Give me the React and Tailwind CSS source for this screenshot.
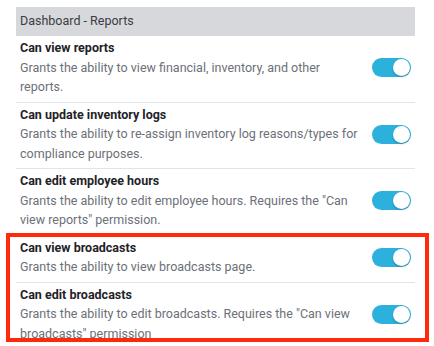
const permissions = [
  {
    id: 'view-reports',
    title: 'Can view reports',
    description: 'Grants the ability to view financial, inventory, and other reports.',
  },
  {
    id: 'update-inventory-logs',
    title: 'Can update inventory logs',
    description: 'Grants the ability to re-assign inventory log reasons/types for compliance purposes.',
  },
  {
    id: 'edit-employee-hours',
    title: 'Can edit employee hours',
    description: 'Grants the ability to edit employee hours. Requires the "Can view reports" permission.',
  },
  {
    id: 'view-broadcasts',
    title: 'Can view broadcasts',
    description: 'Grants the ability to view broadcasts page.',
    highlight: true,
  },
  {
    id: 'edit-broadcasts',
    title: 'Can edit broadcasts',
    description: 'Grants the ability to edit broadcasts. Requires the "Can view broadcasts" permission',
    highlight: true,
  },
];

function Toggle({ on }) {
  return (
    <div
      className={`flex h-[19px] w-[39px] shrink-0 items-center rounded-full px-[1px] ${
        on ? 'justify-end bg-[#2cb0dc]' : 'justify-start bg-gray-300'
      }`}
    >
      <div className="h-[17px] w-[17px] rounded-full bg-white shadow-[0_1px_2px_rgba(0,0,0,0.25)]" />
    </div>
  );
}

function PermissionRow({ item }) {
  return (
    <div className="flex items-center gap-2 border-b border-[#e3e4e8] pt-[3px] pb-[5px] pl-1 pr-1">
      <div className="flex-1">
        <div className="text-[12.5px] font-bold leading-[18.5px] text-[#1f2328]">{item.title}</div>
        <div className="text-[12.5px] leading-[19.5px] text-[#6c7078]">{item.description}</div>
      </div>
      <Toggle on />
    </div>
  );
}

export default function App() {
  const normal = permissions.filter((p) => !p.highlight);
  const highlighted = permissions.filter((p) => p.highlight);

  return (
    <div className="min-h-[346px] bg-white pt-[7px] font-['Roboto',sans-serif]">
      <div className="mx-4 w-[399px]">
        <div className="flex h-[29px] items-center bg-[#d7d8dc] px-1 text-[12.5px] text-[#3a3d42]">
          Dashboard - Reports
        </div>
        {normal.map((item) => (
          <PermissionRow key={item.id} item={item} />
        ))}
        <div className="relative">
          {highlighted.map((item) => (
            <PermissionRow key={item.id} item={item} />
          ))}
          <div className="pointer-events-none absolute -left-[10px] -top-[3px] h-[109px] w-[423px] border-4 border-[#ff2a0c]" />
        </div>
      </div>
    </div>
  );
}
